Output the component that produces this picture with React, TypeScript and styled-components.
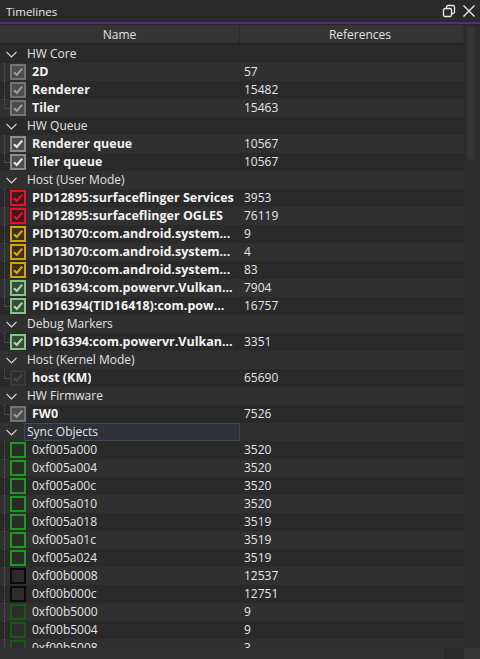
import React from "react";
import styled, { createGlobalStyle } from "styled-components";

const Global = createGlobalStyle`
  html, body { margin: 0; padding: 0; background: #262626; }
  body { font-family: "Open Sans", "Noto Sans", sans-serif; }
`;

const Window = styled.div`
  width: 480px;
  height: 659px;
  background: #272727;
  color: #e6e6e6;
  display: flex;
  flex-direction: column;
  overflow: hidden;
`;

const TitleBar = styled.div`
  height: 22px;
  flex: none;
  display: flex;
  align-items: center;
  padding: 0 4px 0 6px;
  background: #2a2a2a;
  border-bottom: 2px solid #5e2a78;
  font-size: 11.5px;
  color: #e8e8e8;
`;

const Title = styled.span`
  flex: 1;
`;

const TitleIcons = styled.div`
  display: flex;
  gap: 6px;
  align-items: center;
`;

const Body = styled.div`
  flex: 1;
  display: flex;
  min-height: 0;
  padding-top: 1px;
`;

const TreeArea = styled.div`
  width: 464px;
  display: flex;
  flex-direction: column;
  min-height: 0;
`;

const Header = styled.div`
  height: 18px;
  flex: none;
  display: grid;
  grid-template-columns: 240px 223px;
  background: #343434;
  border-bottom: 1px solid #242424;
  font-size: 12px;
  color: #e0e0e0;
`;

const HeaderCell = styled.div<{ $shift?: number }>`
  display: flex;
  align-items: center;
  justify-content: center;
  padding-left: ${(p) => p.$shift ?? 0}px;
  border-right: 1px solid #2a2a2a;
`;

const Rows = styled.div`
  flex: 1;
  overflow: hidden;
  padding-top: 1px;
`;

const Row = styled.div<{ $alt: boolean }>`
  height: 18px;
  display: grid;
  grid-template-columns: 240px 223px;
  background: ${(p) => (p.$alt ? "#303030" : "#2a2a2a")};
  line-height: 18px;
`;

const NameCell = styled.div`
  display: flex;
  align-items: center;
  min-width: 0;
  white-space: nowrap;
  position: relative;
`;

const FocusBox = styled.div`
  position: absolute;
  left: 24px;
  right: 0;
  top: 0;
  bottom: 0;
  border: 1px solid #3e4b5a;
  background: #2e3238;
`;

const Chevron = styled.span`
  width: 24px;
  flex: none;
  display: flex;
  align-items: center;
  padding-left: 6px;
  box-sizing: border-box;
`;

const GroupLabel = styled.span`
  position: relative;
  padding-left: 3px;
  color: #e2e2e2;
  font-size: 12px;
`;

const Guide = styled.span<{ $last: boolean }>`
  width: 6px;
  flex: none;
  align-self: stretch;
  margin-left: 4px;
  box-sizing: border-box;
  border-left: 1px dotted #555;
  ${(p) => (p.$last ? `height: 10px; border-bottom: 1px solid #4a4a4a;` : ``)}
`;

const Box = styled.span`
  width: 16px;
  height: 16px;
  flex: none;
  margin-right: 6px;
  display: flex;
`;

const ItemLabel = styled.span<{ $bold: boolean }>`
  font-weight: ${(p) => (p.$bold ? 700 : 400)};
  color: ${(p) => (p.$bold ? "#f2f2f2" : "#e4e4e4")};
  font-size: ${(p) => (p.$bold ? "12.5px" : "12px")};
  overflow: hidden;
`;

const ValueCell = styled.div`
  padding-left: 4px;
  display: flex;
  align-items: center;
  color: #e6e6e6;
  font-size: 12px;
`;

const VScroll = styled.div`
  width: 16px;
  flex: none;
  background: #2c2c2c;
  padding: 2px 5px 0 3px;
  box-sizing: border-box;
`;

const VThumb = styled.div`
  height: 133px;
  background: #353535;
  border-radius: 0 0 4px 4px;
`;

const HScrollRow = styled.div`
  height: 11px;
  flex: none;
  display: flex;
`;

const HTrack = styled.div`
  width: 464px;
  background: #2a2a2a;
  display: flex;
`;

const HThumb = styled.div`
  width: 444px;
  background: #323232;
`;

const Corner = styled.div`
  flex: 1;
  background: #353535;
`;

type Style = {
  border: string;
  fill: string;
  check?: string;
};

const STY: Record<string, Style> = {
  gray: { border: "#747474", fill: "#4c4c4c", check: "#9a9a9a" },
  white: { border: "#8c8c8c", fill: "#4e4e4e", check: "#e6e6e6" },
  red: { border: "#e8112b", fill: "#3a1a1e", check: "#f0102a" },
  amber: { border: "#d6a20c", fill: "#3a3020", check: "#e0a80c" },
  green: { border: "#86c486", fill: "#3a4a3a", check: "#a6dca6" },
  dark: { border: "#3a3a3a", fill: "#2e2e2e", check: "#464646" },
  sgreen: { border: "#1b9a1b", fill: "#2a2a2a" },
  sblack: { border: "#0c0a10", fill: "#2c2c2c" },
  sdgreen: { border: "#155a15", fill: "#2c2c2c" },
};

function CheckBox({ kind }: { kind: string }) {
  const s = STY[kind];
  return (
    <Box>
      <svg width="16" height="16" viewBox="0 0 16 16">
        <rect x="1" y="1" width="14" height="14" fill={s.fill} stroke={s.border} strokeWidth="2" />
        {s.check && (
          <path d="M4 8.2 L6.8 11 L12.2 4.6" fill="none" stroke={s.check} strokeWidth="2.2" />
        )}
      </svg>
    </Box>
  );
}

type Item = { name: string; value: string; kind: string; bold?: boolean };
type Group = { title: string; items: Item[] };

const groups: Group[] = [
  {
    title: "HW Core",
    items: [
      { name: "2D", value: "57", kind: "gray" },
      { name: "Renderer", value: "15482", kind: "gray" },
      { name: "Tiler", value: "15463", kind: "gray" },
    ],
  },
  {
    title: "HW Queue",
    items: [
      { name: "Renderer queue", value: "10567", kind: "white" },
      { name: "Tiler queue", value: "10567", kind: "white" },
    ],
  },
  {
    title: "Host (User Mode)",
    items: [
      { name: "PID12895:surfaceflinger Services", value: "3953", kind: "red" },
      { name: "PID12895:surfaceflinger OGLES", value: "76119", kind: "red" },
      { name: "PID13070:com.android.system...", value: "9", kind: "amber" },
      { name: "PID13070:com.android.system...", value: "4", kind: "amber" },
      { name: "PID13070:com.android.system...", value: "83", kind: "amber" },
      { name: "PID16394:com.powervr.Vulkan...", value: "7904", kind: "green" },
      { name: "PID16394(TID16418):com.pow...", value: "16757", kind: "green" },
    ],
  },
  {
    title: "Debug Markers",
    items: [{ name: "PID16394:com.powervr.Vulkan...", value: "3351", kind: "green" }],
  },
  {
    title: "Host (Kernel Mode)",
    items: [{ name: "host (KM)", value: "65690", kind: "dark" }],
  },
  {
    title: "HW Firmware",
    items: [{ name: "FW0", value: "7526", kind: "gray" }],
  },
  {
    title: "Sync Objects",
    items: [
      { name: "0xf005a000", value: "3520", kind: "sgreen", bold: false },
      { name: "0xf005a004", value: "3520", kind: "sgreen", bold: false },
      { name: "0xf005a00c", value: "3520", kind: "sgreen", bold: false },
      { name: "0xf005a010", value: "3520", kind: "sgreen", bold: false },
      { name: "0xf005a018", value: "3519", kind: "sgreen", bold: false },
      { name: "0xf005a01c", value: "3519", kind: "sgreen", bold: false },
      { name: "0xf005a024", value: "3519", kind: "sgreen", bold: false },
      { name: "0xf00b0008", value: "12537", kind: "sblack", bold: false },
      { name: "0xf00b000c", value: "12751", kind: "sblack", bold: false },
      { name: "0xf00b5000", value: "9", kind: "sdgreen", bold: false },
      { name: "0xf00b5004", value: "9", kind: "sdgreen", bold: false },
      { name: "0xf00b5008", value: "3", kind: "sdgreen", bold: false },
    ],
  },
];

function ChevronIcon() {
  return (
    <svg width="11" height="7" viewBox="0 0 11 7">
      <path d="M0.5 0.8 L5.5 5.8 L10.5 0.8" fill="none" stroke="#d8d8d8" strokeWidth="1.2" />
    </svg>
  );
}

export default function App() {
  let idx = 0;
  const rows: React.ReactNode[] = [];
  groups.forEach((g) => {
    const gi = idx++;
    const focus = g.title === "Sync Objects";
    rows.push(
      <Row key={`g${gi}`} $alt={gi % 2 === 1}>
        <NameCell>
          <Chevron>
            <ChevronIcon />
          </Chevron>
          {focus && <FocusBox />}
          <GroupLabel>{g.title}</GroupLabel>
        </NameCell>
        <ValueCell />
      </Row>
    );
    g.items.forEach((it, i) => {
      const ri = idx++;
      rows.push(
        <Row key={`r${ri}`} $alt={ri % 2 === 1}>
          <NameCell>
            <Guide $last={i === g.items.length - 1} />
            <CheckBox kind={it.kind} />
            <ItemLabel $bold={it.bold !== false}>{it.name}</ItemLabel>
          </NameCell>
          <ValueCell>{it.value}</ValueCell>
        </Row>
      );
    });
  });

  return (
    <Window>
      <Global />
      <TitleBar>
        <Title>Timelines</Title>
        <TitleIcons>
          <svg width="14" height="14" viewBox="0 0 14 14">
            <rect x="1.5" y="4.5" width="8" height="8" rx="1.5" fill="none" stroke="#e8e8e8" strokeWidth="1.3" />
            <path d="M4.5 4.5 V3 a1.5 1.5 0 0 1 1.5 -1.5 H11 a1.5 1.5 0 0 1 1.5 1.5 V8 a1.5 1.5 0 0 1 -1.5 1.5 H9.5" fill="none" stroke="#e8e8e8" strokeWidth="1.3" />
          </svg>
          <svg width="14" height="14" viewBox="0 0 14 14">
            <path d="M1.5 1.5 L12.5 12.5 M12.5 1.5 L1.5 12.5" stroke="#e8e8e8" strokeWidth="1.4" />
          </svg>
        </TitleIcons>
      </TitleBar>
      <Body>
        <TreeArea>
          <Header>
            <HeaderCell>Name</HeaderCell>
            <HeaderCell $shift={18}>References</HeaderCell>
          </Header>
          <Rows>{rows}</Rows>
        </TreeArea>
        <VScroll>
          <VThumb />
        </VScroll>
      </Body>
      <HScrollRow>
        <HTrack>
          <HThumb />
        </HTrack>
        <Corner />
      </HScrollRow>
    </Window>
  );
}
